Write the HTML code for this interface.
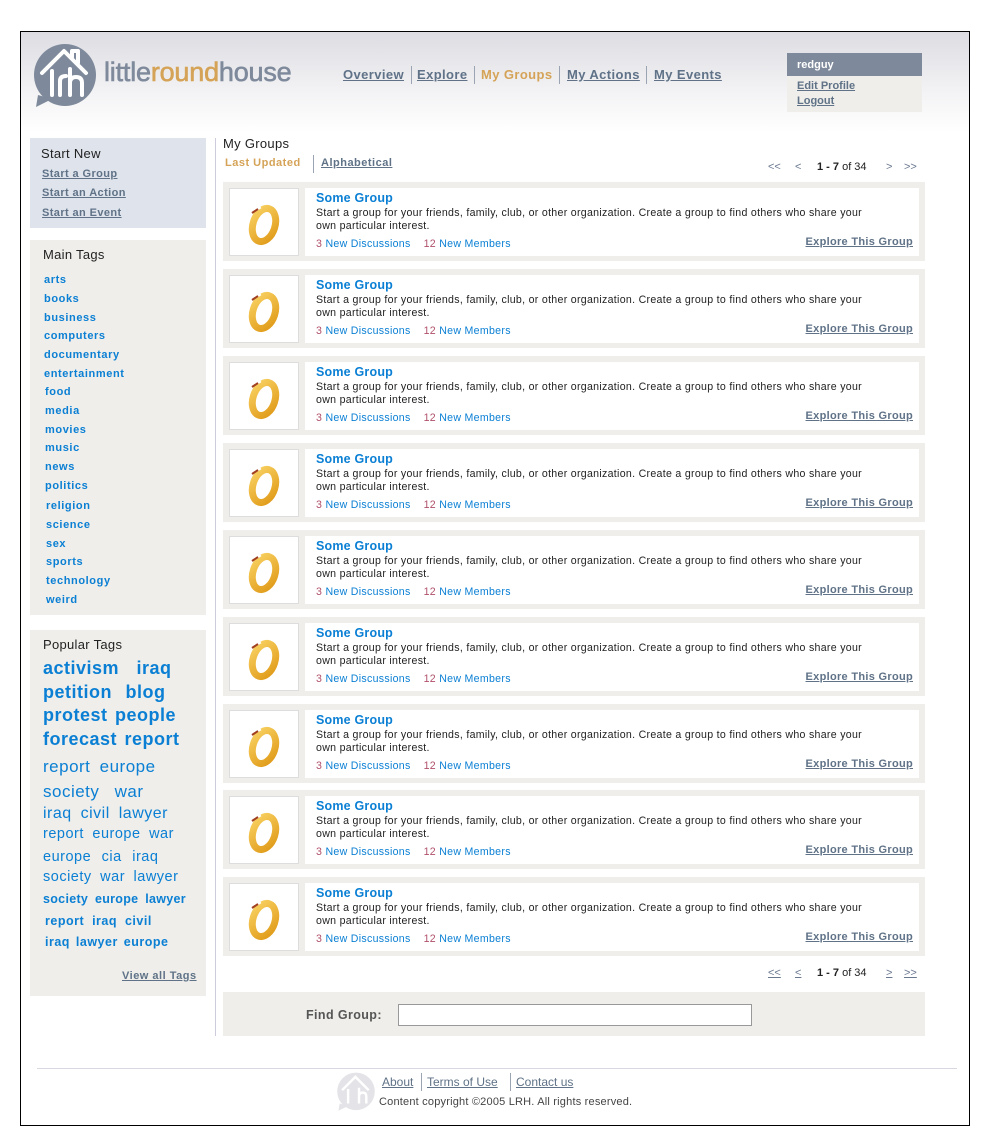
<!DOCTYPE html>
<html><head><meta charset="utf-8"><style>
*{margin:0;padding:0;box-sizing:border-box}
body{width:988px;height:1144px;background:#fff;font-family:"Liberation Sans",sans-serif;font-size:11px;color:#222;position:relative;overflow:hidden}
.a{position:absolute}
a{color:#5f7287;text-decoration:underline;font-weight:bold}
#frame{left:20px;top:31px;width:950px;height:1095px;border:1px solid #000;background:linear-gradient(#dcdce2 0px,#f3f3f5 60px,#fff 100px,#fff)}
.nav{top:67px;font-size:13px;font-weight:bold;letter-spacing:.4px}
.nav a{color:#5f7287}
.sep{top:66px;width:1px;height:18px;background:#9aa4b2}
.box{left:30px;width:176px;background:#efeeea}
.h{font-size:13px;color:#222;letter-spacing:.3px}
.mt{left:44px;color:#0a7fd4;font-weight:bold;font-size:11px;letter-spacing:.6px}
.tag{color:#0a7fd4;position:absolute;left:43px;white-space:nowrap;letter-spacing:.5px}
.row{left:223px;width:702px;height:79px;background:#efeeea}
.th{position:absolute;left:6px;top:6px;width:70px;height:68px;background:#fff;border:1px solid #ddd}
.tx{position:absolute;left:82px;top:6px;width:614px;height:68px;background:#fff}
.tt{position:absolute;left:11px;top:3px;color:#0a7fd4;font-weight:bold;font-size:12.5px;letter-spacing:.2px}
.dd{position:absolute;left:11px;top:19px;width:558px;line-height:13px;font-size:10.6px;color:#222;letter-spacing:.3px}
.st{position:absolute;left:11px;top:50px;font-size:10.6px;color:#0a7fd4;letter-spacing:.3px}
.st b{color:#b0506a;font-weight:normal}
.ex{position:absolute;right:6px;top:48px;font-size:11px;letter-spacing:.3px}
.pg{font-size:11px;color:#6a7890}
.pg span{position:absolute;white-space:nowrap}
</style></head><body>
<div id="frame" class="a"></div>
<svg class="a" style="left:32px;top:43px" width="66" height="66" viewBox="0 0 66 66">
<circle cx="33" cy="32" r="31" fill="#7e8a9b"/><path d="M6 52 L4 64 L20 56Z" fill="#7e8a9b"/>
<path d="M10 30 L32 8 L54 30 M40 14 V8 H46 V20" stroke="#fff" stroke-width="4" fill="none" stroke-linecap="round" stroke-linejoin="round"/>
<path d="M20 28 V52 M28 52 V38 Q28 33 34 33 M38 26 V52 M38 40 Q38 34 44 34 Q50 34 50 40 V52" stroke="#fff" stroke-width="4" fill="none" stroke-linecap="round"/>
</svg>
<div class="a" style="left:104px;top:57px;font-size:27px;color:#7e8a9b;letter-spacing:-.2px;-webkit-text-stroke:.6px currentColor">little<span style="color:#d5a357">round</span>house</div>
<div class="a nav" style="left:343px"><a>Overview</a></div>
<div class="a sep" style="left:411px"></div>
<div class="a nav" style="left:417px"><a>Explore</a></div>
<div class="a sep" style="left:474px"></div>
<div class="a nav" style="left:481px;color:#d5a357">My Groups</div>
<div class="a sep" style="left:559px"></div>
<div class="a nav" style="left:567px"><a>My Actions</a></div>
<div class="a sep" style="left:646px"></div>
<div class="a nav" style="left:654px"><a>My Events</a></div>
<div class="a" style="left:787px;top:53px;width:135px;height:59px;background:#efeeea"></div>
<div class="a" style="left:787px;top:53px;width:135px;height:23px;background:#7e8a9b;color:#fff;font-weight:bold;padding:6px 0 0 10px">redguy</div>
<div class="a" style="left:797px;top:80px"><a>Edit Profile</a></div>
<div class="a" style="left:797px;top:95px"><a>Logout</a></div>

<div class="a box" style="top:138px;height:90px;background:#dfe4ec"></div>
<div class="a h" style="left:41px;top:146px">Start New</div>
<div class="a" style="left:42px;top:168px;letter-spacing:.4px"><a>Start a Group</a></div>
<div class="a" style="left:42px;top:187px;letter-spacing:.4px"><a>Start an Action</a></div>
<div class="a" style="left:42px;top:207px;letter-spacing:.4px"><a>Start an Event</a></div>

<div class="a box" style="top:240px;height:375px"></div>
<div class="a h" style="left:43px;top:247px">Main Tags</div>
<div class="a mt" style="top:274px">arts</div>
<div class="a mt" style="top:293px">books</div>
<div class="a mt" style="top:312px">business</div>
<div class="a mt" style="top:330px">computers</div>
<div class="a mt" style="top:349px">documentary</div>
<div class="a mt" style="top:368px">entertainment</div>
<div class="a mt" style="top:386px;left:45px">food</div>
<div class="a mt" style="top:405px;left:45px">media</div>
<div class="a mt" style="top:424px;left:45px">movies</div>
<div class="a mt" style="top:442px;left:45px">music</div>
<div class="a mt" style="top:461px;left:45px">news</div>
<div class="a mt" style="top:480px;left:45px">politics</div>
<div class="a mt" style="top:500px;left:46px">religion</div>
<div class="a mt" style="top:519px;left:46px">science</div>
<div class="a mt" style="top:538px;left:46px">sex</div>
<div class="a mt" style="top:556px;left:46px">sports</div>
<div class="a mt" style="top:575px;left:46px">technology</div>
<div class="a mt" style="top:594px;left:46px">weird</div>

<div class="a box" style="top:630px;height:366px"></div>
<div class="a h" style="left:43px;top:637px">Popular Tags</div>
<div class="tag" style="top:658px;font-size:18px;font-weight:bold;word-spacing:12px">activism iraq</div>
<div class="tag" style="top:682px;font-size:18px;font-weight:bold;word-spacing:8px">petition blog</div>
<div class="tag" style="top:705px;font-size:18px;font-weight:bold;word-spacing:2px">protest people</div>
<div class="tag" style="top:729px;font-size:18px;font-weight:bold;word-spacing:2px">forecast report</div>
<div class="tag" style="top:757px;font-size:17px;word-spacing:4px">report europe</div>
<div class="tag" style="top:782px;font-size:17px;word-spacing:10px">society war</div>
<div class="tag" style="top:805px;font-size:16px;word-spacing:4px">iraq civil lawyer</div>
<div class="tag" style="top:826px;font-size:14.5px;word-spacing:4px">report europe war</div>
<div class="tag" style="top:849px;font-size:14.5px;word-spacing:6px">europe cia iraq</div>
<div class="tag" style="top:869px;font-size:14.5px;word-spacing:4px">society war lawyer</div>
<div class="tag" style="top:892px;font-size:12.5px;font-weight:bold;word-spacing:3px;letter-spacing:.3px">society europe lawyer</div>
<div class="tag" style="top:914px;font-size:12.5px;font-weight:bold;left:45px;word-spacing:4px">report iraq civil</div>
<div class="tag" style="top:935px;font-size:12.5px;font-weight:bold;left:45px;word-spacing:2px">iraq lawyer europe</div>
<div class="a" style="left:122px;top:970px;letter-spacing:.5px"><a>View all Tags</a></div>

<div class="a" style="left:215px;top:138px;width:1px;height:898px;background:#ccd"></div>

<div class="a" style="left:223px;top:136px;font-size:13px;color:#222;letter-spacing:.3px">My Groups</div>
<div class="a" style="left:225px;top:157px;font-weight:bold;color:#d5a357;letter-spacing:.5px">Last Updated</div>
<div class="a" style="left:313px;top:155px;width:1px;height:18px;background:#9aa4b2"></div>
<div class="a" style="left:321px;top:157px;letter-spacing:.5px"><a>Alphabetical</a></div>
<div class="a pg" style="left:0;top:161px;width:988px">
<span style="left:768px">&lt;&lt;</span><span style="left:795px">&lt;</span><span style="left:817px;color:#222"><b>1 - 7</b> of 34</span><span style="left:886px">&gt;</span><span style="left:904px">&gt;&gt;</span></div>

<div id="rows"></div>
<script>
var t=[182,269,356,443,530,617,704,790,877],h='';
t.forEach(function(y){h+='<div class="a row" style="top:'+y+'px"><div class="th"><svg width="68" height="66" viewBox="0 0 68 66"><defs><linearGradient id="g" x1="0" y1="0" x2="1" y2="1"><stop offset="0" stop-color="#f8d060"/><stop offset="1" stop-color="#e09a18"/></linearGradient></defs><ellipse cx="34" cy="36" rx="11" ry="17" transform="rotate(18 34 36)" fill="none" stroke="url(#g)" stroke-width="7"/><rect x="22" y="18" width="9" height="4" fill="#fff" transform="rotate(-30 26 20)"/><path d="M22 24 l6-4" stroke="#a04020" stroke-width="2"/></svg></div><div class="tx"><div class="tt">Some Group</div><div class="dd">Start a group for your friends, family, club, or other organization. Create a group to find others who share your own particular interest.</div><div class="st"><b>3</b> New Discussions &nbsp;&nbsp; <b>12</b> New Members</div><div class="ex"><a>Explore This Group</a></div></div></div>'});
document.getElementById('rows').innerHTML=h;
</script>

<div class="a pg" style="left:0;top:967px;width:988px">
<span style="left:768px;text-decoration:underline">&lt;&lt;</span><span style="left:795px;text-decoration:underline">&lt;</span><span style="left:817px;color:#222"><b>1 - 7</b> of 34</span><span style="left:886px;text-decoration:underline">&gt;</span><span style="left:904px;text-decoration:underline">&gt;&gt;</span></div>

<div class="a" style="left:223px;top:992px;width:702px;height:44px;background:#efeeea"></div>
<div class="a" style="left:306px;top:1008px;font-size:12.5px;font-weight:bold;color:#555;letter-spacing:.4px">Find Group:</div>
<div class="a" style="left:398px;top:1004px;width:354px;height:22px;background:#fff;border:1px solid #999"></div>

<div class="a" style="left:37px;top:1068px;width:920px;height:1px;background:#d8d8e0"></div>
<svg class="a" style="left:336px;top:1072px" width="40" height="40" viewBox="0 0 66 66"><circle cx="33" cy="32" r="31" fill="#e4e4e8"/><path d="M6 52 L4 64 L20 56Z" fill="#e4e4e8"/><path d="M10 30 L32 8 L54 30 M20 28 V52 M38 26 V52 M38 40 Q38 34 44 34 Q50 34 50 40 V52" stroke="#fff" stroke-width="4" fill="none"/></svg>
<div class="a" style="left:382px;top:1075px;font-size:12px"><a style="font-weight:normal">About</a></div>
<div class="a" style="left:421px;top:1073px;width:1px;height:18px;background:#9aa4b2"></div>
<div class="a" style="left:427px;top:1075px;font-size:12px"><a style="font-weight:normal">Terms of Use</a></div>
<div class="a" style="left:510px;top:1073px;width:1px;height:18px;background:#9aa4b2"></div>
<div class="a" style="left:516px;top:1075px;font-size:12px"><a style="font-weight:normal">Contact us</a></div>
<div class="a" style="left:379px;top:1096px;font-size:11px;color:#444;letter-spacing:.2px">Content copyright ©2005 LRH. All rights reserved.</div>
</body></html>
